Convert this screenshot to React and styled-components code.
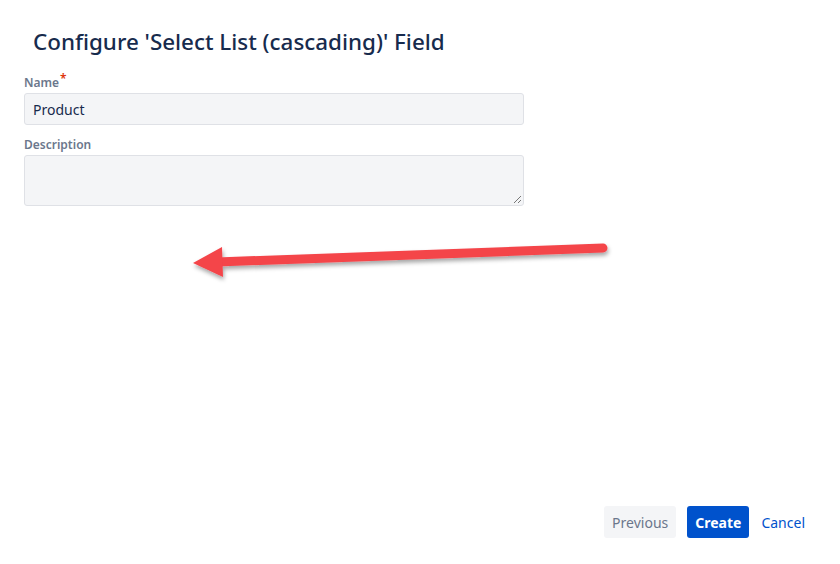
import React from "react";
import styled, { createGlobalStyle } from "styled-components";

const Global = createGlobalStyle`
  html, body { margin: 0; padding: 0; background: #fff; }
  body { font-family: "Segoe UI", "Noto Sans", "Open Sans", sans-serif; }
  * { box-sizing: border-box; }
`;

const Dialog = styled.div`
  position: relative;
  width: 840px;
  height: 564px;
  background: #fff;
  display: flex;
  flex-direction: column;
  padding: 24px 24px 26px 24px;
`;

const Title = styled.h1`
  margin: 0 0 0 9px;
  font-size: 22.4px;
  line-height: 36px;
  font-weight: 500;
  color: #172b4d;
`;

const Form = styled.div`
  display: flex;
  flex-direction: column;
  width: 500px;
  margin-top: 11px;
  gap: 12px;
`;

const Field = styled.div`
  display: flex;
  flex-direction: column;
`;

const Label = styled.label`
  font-size: 12px;
  line-height: 16px;
  font-weight: 600;
  color: #6b778c;
  margin-bottom: 2px;
`;

const Req = styled.span`
  color: #de350b;
  font-size: 12px;
  vertical-align: 4px;
  margin-left: 1px;
`;

const Input = styled.div`
  height: 32px;
  background: #f4f5f7;
  border: 1px solid #dfe1e6;
  border-radius: 3px;
  padding: 0 8px;
  display: flex;
  align-items: center;
  font-size: 14px;
  color: #172b4d;
`;

const TextArea = styled.div`
  position: relative;
  height: 51px;
  background: #f4f5f7;
  border: 1px solid #dfe1e6;
  border-radius: 3px;
`;

const Grip = styled.svg`
  position: absolute;
  right: 1px;
  bottom: 1px;
`;

const Spacer = styled.div`
  flex: 1;
`;

const Footer = styled.div`
  display: flex;
  justify-content: flex-end;
  align-items: center;
  gap: 11px;
  padding-right: 11px;
`;

const Button = styled.button`
  height: 32px;
  border: none;
  border-radius: 3px;
  padding: 0 ${(p) => (p.$variant === "link" ? "0" : "8px")};
  font-family: inherit;
  font-size: 14px;
  cursor: pointer;
  background: ${(p) =>
    p.$variant === "primary" ? "#0052cc" : p.$variant === "link" ? "transparent" : "#f4f5f7"};
  color: ${(p) =>
    p.$variant === "primary" ? "#fff" : p.$variant === "link" ? "#0052cc" : "#6b778c"};
  font-weight: ${(p) => (p.$variant === "primary" ? 700 : 400)};
  margin-left: ${(p) => (p.$variant === "link" ? "1px" : "0")};
`;

const Arrow = styled.svg`
  position: absolute;
  left: 185px;
  top: 236px;
  overflow: visible;
`;

export default function App() {
  return (
    <>
      <Global />
      <Dialog>
        <Title>Configure 'Select List (cascading)' Field</Title>
        <Form>
          <Field>
            <Label>
              Name<Req>*</Req>
            </Label>
            <Input>Product</Input>
          </Field>
          <Field>
            <Label>Description</Label>
            <TextArea>
              <Grip width="10" height="10" viewBox="0 0 10 10">
                <path d="M9 2 L2 9 M9 6 L6 9" stroke="#777" strokeWidth="1" />
              </Grip>
            </TextArea>
          </Field>
        </Form>
        <Spacer />
        <Footer>
          <Button $variant="subtle">Previous</Button>
          <Button $variant="primary">Create</Button>
          <Button $variant="link">Cancel</Button>
        </Footer>
        <Arrow width="430" height="50" viewBox="0 0 430 50">
          <defs>
            <filter id="sh" x="-10%" y="-50%" width="120%" height="200%">
              <feDropShadow dx="1" dy="3" stdDeviation="2" floodColor="#000" floodOpacity="0.35" />
            </filter>
          </defs>
          <g filter="url(#sh)">
            <line x1="418" y1="12" x2="32" y2="26" stroke="#f4444a" strokeWidth="9" strokeLinecap="round" />
            <polygon points="8,27 37,11 38,41" fill="#f4444a" />
          </g>
        </Arrow>
      </Dialog>
    </>
  );
}
